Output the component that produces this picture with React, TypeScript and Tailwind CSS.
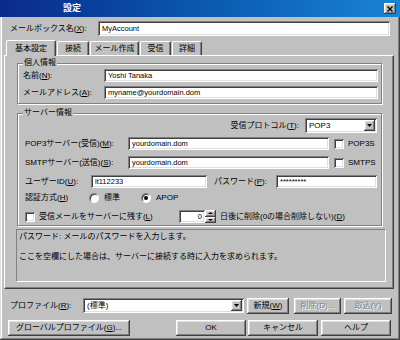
import React from "react";

// Windows classic 3D edges
const raised =
  "shadow-[inset_-1px_-1px_#404040,inset_1px_1px_#ffffff,inset_-2px_-2px_#808080,inset_2px_2px_#dfdfdf]";
const sunken =
  "shadow-[inset_1px_1px_#808080,inset_-1px_-1px_#ffffff,inset_2px_2px_#404040,inset_-2px_-2px_#dfdfdf]";

const K = ({ c }: { c: string }) => <span className="underline">{c}</span>;

const TextBox = ({ value, className = "" }: { value: string; className?: string }) => (
  <div
    className={`h-[13px] bg-white ${sunken} flex items-center pl-[4px] text-[7.5px] leading-none whitespace-nowrap overflow-hidden ${className}`}
  >
    {value}
  </div>
);

const Arrow = ({ up, small }: { up?: boolean; small?: boolean }) => (
  <svg width={small ? 5 : 5} height={small ? 2 : 3} viewBox="0 0 5 3" preserveAspectRatio="none">
    <path d={up ? "M0 3 L2.5 0 L5 3 Z" : "M0 0 L5 0 L2.5 3 Z"} fill="#000" />
  </svg>
);

const Combo = ({ value, className = "" }: { value: string; className?: string }) => (
  <div className={`h-[15px] bg-white ${sunken} flex items-center p-[2px] ${className}`}>
    <span className="flex-1 pl-[2px] text-[8px] leading-none whitespace-nowrap">{value}</span>
    <span className={`w-[11px] h-full bg-[#c0c0c0] ${raised} flex items-center justify-center`}>
      <Arrow />
    </span>
  </div>
);

const Btn = ({
  children,
  className = "",
  disabled,
}: {
  children: React.ReactNode;
  className?: string;
  disabled?: boolean;
}) => (
  <button
    type="button"
    className={`h-[16px] bg-[#c0c0c0] ${raised} flex items-center justify-center leading-none whitespace-nowrap ${
      disabled ? "text-[#808080] [text-shadow:1px_1px_0_#ffffff]" : "text-black"
    } ${className}`}
  >
    {children}
  </button>
);

const Check = () => <span className={`w-[10px] h-[10px] bg-white ${sunken} shrink-0`} />;

const Radio = ({ on }: { on?: boolean }) => (
  <span className="w-[10px] h-[10px] rounded-full bg-white border border-t-[#808080] border-l-[#808080] border-r-white border-b-white shadow-[inset_1px_1px_#404040] flex items-center justify-center shrink-0">
    {on && <span className="w-[4px] h-[4px] rounded-full bg-black" />}
  </span>
);

const Group = ({ title, className = "", children }: { title: string; className?: string; children: React.ReactNode }) => (
  <fieldset
    className={`border border-[#808080] shadow-[1px_1px_0_#ffffff,inset_1px_1px_0_#ffffff] mx-[12px] mr-[11px] ${className}`}
  >
    <legend className="ml-[5px] px-[1px] leading-[10px] bg-[#c0c0c0]">{title}</legend>
    {children}
  </fieldset>
);

const tabs = ["基本設定", "接続", "メール作成", "受信", "詳細"];
const tabW = ["w-[50px]", "w-[32px]", "w-[49px]", "w-[31px]", "w-[30px]"];

export default function App() {
  return (
    <div className="w-[400px] h-[340px] bg-[#c0c0c0] flex flex-col overflow-hidden text-[8px] text-black font-['Liberation_Sans','Noto_Sans_CJK_JP',sans-serif] shadow-[inset_-1px_-1px_#404040,inset_1px_1px_#dfdfdf,inset_-2px_-2px_#808080,inset_2px_2px_#ffffff]">
      {/* title bar */}
      <div className="h-[17px] bg-linear-to-r from-[#0a2a8c] to-[#1a84d4] flex items-center">
        <span className="pl-[63px] text-white font-bold text-[9px] leading-none">設定</span>
        <span className={`ml-auto mr-[4px] w-[12px] h-[11px] bg-[#c0c0c0] ${raised} flex items-center justify-center`}>
          <svg width="6" height="6" viewBox="0 0 6 6">
            <path d="M0.5 0.5 L5.5 5.5 M5.5 0.5 L0.5 5.5" stroke="#000" strokeWidth="1.4" />
          </svg>
        </span>
      </div>

      {/* mailbox name */}
      <div className="mt-[4px] h-[15px] flex items-center pl-[10px] pr-[10px]">
        <span className="w-[88px] leading-none">
          メールボックス名(<K c="X" />):
        </span>
        <TextBox value="MyAccount" className="flex-1 h-[15px]" />
      </div>

      {/* tabs */}
      <div className="mt-[4px] h-[15px] flex items-end pl-[6px]">
        {tabs.map((t, i) => (
          <div
            key={t}
            className={`${tabW[i]} ${
              i === 0 ? "h-[16px] relative z-10 bg-[#c0c0c0] -mb-px" : "h-[14px] ml-[1px]"
            } border-l border-t border-white border-r border-r-[#404040] rounded-t-[2px] shadow-[inset_-1px_0_#808080] flex items-center justify-center leading-none`}
          >
            {t}
          </div>
        ))}
      </div>

      {/* tab panel */}
      <div className="mx-[4px] mr-[6px] h-[234px] border border-t-white border-l-white border-r-[#404040] border-b-[#404040] shadow-[inset_-1px_-1px_#808080] flex flex-col">
        <Group title="個人情報" className="mt-[2px] pb-[4px]">
          <div className="flex flex-col gap-[4px] pt-[1px] pl-[5px] pr-[3px]">
            <div className="flex items-center">
              <span className="w-[81px] leading-none">
                名前(<K c="N" />):
              </span>
              <TextBox value="Yoshi Tanaka" className="flex-1" />
            </div>
            <div className="flex items-center">
              <span className="w-[81px] leading-none">
                メールアドレス(<K c="A" />):
              </span>
              <TextBox value="myname@yourdomain.dom" className="flex-1" />
            </div>
          </div>
        </Group>

        <Group title="サーバー情報" className="mt-[4px] pb-[2px]">
          <div className="flex flex-col pl-[7px] pr-[4px]">
            <div className="flex items-center justify-end h-[15px]">
              <span className="leading-none mr-[6px]">
                受信プロトコル(<K c="T" />):
              </span>
              <Combo value="POP3" className="w-[72px]" />
            </div>
            <div className="mt-[4px] flex items-center">
              <span className="w-[103px] leading-none">
                POP3サーバー(受信)(<K c="M" />):
              </span>
              <TextBox value="yourdomain.dom" className="w-[201px]" />
              <span className="ml-[5px] flex items-center gap-[4px] leading-none">
                <Check />
                POP3S
              </span>
            </div>
            <div className="mt-[6px] flex items-center">
              <span className="w-[103px] leading-none">
                SMTPサーバー(送信)(<K c="S" />):
              </span>
              <TextBox value="yourdomain.dom" className="w-[201px]" />
              <span className="ml-[5px] flex items-center gap-[4px] leading-none">
                <Check />
                SMTPS
              </span>
            </div>
            <div className="mt-[6px] flex items-center">
              <span className="w-[66px] leading-none">
                ユーザーID(<K c="U" />):
              </span>
              <TextBox value="lt112233" className="w-[116px]" />
              <span className="ml-[7px] w-[62px] leading-none">
                パスワード(<K c="P" />):
              </span>
              <TextBox value="*********" className="flex-1" />
            </div>
            <div className="mt-[5px] h-[10px] flex items-center leading-none">
              <span className="w-[64px]">
                認証方式(<K c="H" />)
              </span>
              <Radio />
              <span className="ml-[5px] w-[37px]">標準</span>
              <Radio on />
              <span className="ml-[5px]">APOP</span>
            </div>
            <div className="mt-[7px] flex items-center leading-none">
              <Check />
              <span className="ml-[4px] w-[140px]">
                受信メールをサーバーに残す(<K c="L" />)
              </span>
              <div className={`w-[26px] h-[13px] bg-white ${sunken} flex items-center justify-end pr-[3px] text-[7.5px]`}>
                0
              </div>
              <span className="w-[11px] h-[13px] flex flex-col">
                <span className={`flex-1 bg-[#c0c0c0] ${raised} flex items-center justify-center`}>
                  <Arrow up small />
                </span>
                <span className={`flex-1 bg-[#c0c0c0] ${raised} flex items-center justify-center`}>
                  <Arrow small />
                </span>
              </span>
              <span className="ml-[4px]">
                日後に削除(0の場合削除しない)(<K c="D" />)
              </span>
            </div>
          </div>
        </Group>

        <div className="mt-[3px] ml-[11px] mr-[7px] h-[53px] border border-t-[#808080] border-l-[#808080] border-r-white border-b-white px-[2px] pt-[2px] leading-[10px]">
          <p>パスワード: メールのパスワードを入力します。</p>
          <p className="mt-[10px]">ここを空欄にした場合は、サーバーに接続する時に入力を求められます。</p>
        </div>
      </div>

      {/* profile row */}
      <div className="mt-[9px] h-[15px] flex items-center pl-[10px]">
        <span className="w-[73px] leading-none">
          プロファイル(<K c="R" />):
        </span>
        <Combo value="(標準)" className="w-[161px]" />
        <Btn className="ml-[3px] w-[42px] h-[15px]">
          新規(<K c="W" />)
        </Btn>
        <Btn disabled className="ml-[5px] w-[47px] h-[15px]">
          削除(D)...
        </Btn>
        <Btn disabled className="ml-[3px] w-[48px] h-[15px]">
          取込(Y)
        </Btn>
      </div>

      {/* buttons row */}
      <div className="mt-[7px] flex items-center pl-[8px]">
        <Btn className="w-[122px]">
          グローバルプロファイル(<K c="G" />)...
        </Btn>
        <Btn className="ml-[46px] w-[70px]">OK</Btn>
        <Btn className="ml-[2px] w-[70px]">キャンセル</Btn>
        <Btn className="ml-[3px] w-[70px]">ヘルプ</Btn>
      </div>
    </div>
  );
}
